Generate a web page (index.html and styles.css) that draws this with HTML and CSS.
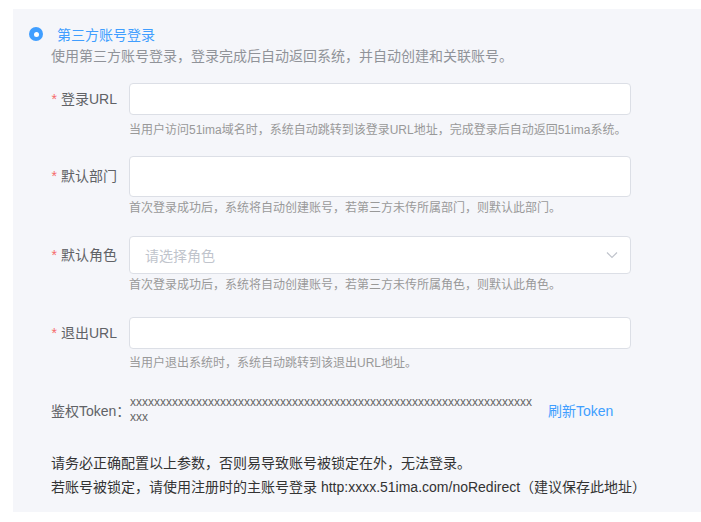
FILE: index.html
```html
<!DOCTYPE html>
<html lang="zh-CN">
<head>
  <meta charset="UTF-8">
  <title>第三方账号登录</title>
  <link rel="stylesheet" href="styles.css">
</head>
<body>

<div class="panel">
  <div class="radio-row">
    <span class="radio"></span>
    <span class="radio-title">第三方账号登录</span>
  </div>
  <p class="desc">使用第三方账号登录，登录完成后自动返回系统，并自动创建和关联账号。</p>

  <div class="form-item item-login">
    <label class="item-label"><span class="req">*</span>登录URL</label>
    <div class="item-body">
      <input class="input" type="text">
      <div class="help">当用户访问51ima域名时，系统自动跳转到该登录URL地址，完成登录后自动返回51ima系统。</div>
    </div>
  </div>

  <div class="form-item item-dept">
    <label class="item-label"><span class="req">*</span>默认部门</label>
    <div class="item-body">
      <input class="input input-tall" type="text">
      <div class="help">首次登录成功后，系统将自动创建账号，若第三方未传所属部门，则默认此部门。</div>
    </div>
  </div>

  <div class="form-item item-role">
    <label class="item-label"><span class="req">*</span>默认角色</label>
    <div class="item-body">
      <div class="select">
        <span class="placeholder">请选择角色</span>
        <svg class="chevron" width="12" height="8" viewBox="0 0 12 8"><path d="M1 1.5 6 6.5 11 1.5" fill="none" stroke="#c0c4cc" stroke-width="1.2"/></svg>
      </div>
      <div class="help">首次登录成功后，系统将自动创建账号，若第三方未传所属角色，则默认此角色。</div>
    </div>
  </div>

  <div class="form-item item-logout">
    <label class="item-label"><span class="req">*</span>退出URL</label>
    <div class="item-body">
      <input class="input" type="text">
      <div class="help">当用户退出系统时，系统自动跳转到该退出URL地址。</div>
    </div>
  </div>

  <div class="token-row">
    <span class="token-label">鉴权Token：</span>
    <span class="token-value">xxxxxxxxxxxxxxxxxxxxxxxxxxxxxxxxxxxxxxxxxxxxxxxxxxxxxxxxxxxxxxxxxxxxxx</span>
    <a class="token-link" href="#">刷新Token</a>
  </div>

  <div class="notes">
    <p>请务必正确配置以上参数，否则易导致账号被锁定在外，无法登录。</p>
    <p>若账号被锁定，请使用注册时的主账号登录 http:xxxx.51ima.com/noRedirect（建议保存此地址）</p>
  </div>
</div>

</body>
</html>
```

FILE: styles.css
```css
body {
  margin: 0;
  background-color: #fff;
  font-family: "Liberation Sans", "Noto Sans CJK SC", sans-serif;
  color: #333;
}

.panel {
  margin: 9px 0 0 13px;
  height: 503px;
  box-sizing: border-box;
  padding: 17px 0 0 38px;
  background-color: #f5f6fa;
}

.radio-row {
  display: flex;
  align-items: center;
  height: 16px;
  margin-left: -22px;
}

.radio {
  width: 14px;
  height: 14px;
  border-radius: 50%;
  background-color: #409eff;
  display: flex;
  align-items: center;
  justify-content: center;
}

.radio::after {
  content: "";
  width: 5px;
  height: 5px;
  border-radius: 50%;
  background-color: #fff;
}

.radio-title {
  margin-left: 14px;
  font-size: 14px;
  color: #409eff;
}

.desc {
  margin: 4px 0 0;
  font-size: 14px;
  line-height: 20px;
  color: #909399;
}

.form-item {
  display: flex;
}

.item-login { margin-top: 17px; }
.item-dept { margin-top: 17px; }
.item-role { margin-top: 19px; }
.item-logout { margin-top: 23px; }

.item-label {
  width: 78px;
  box-sizing: border-box;
  padding-right: 12px;
  text-align: right;
  white-space: nowrap;
  font-size: 14px;
  line-height: 32px;
  color: #606266;
}

.item-dept .item-label { line-height: 41px; }
.item-role .item-label { line-height: 38px; }

.req {
  color: #f56c6c;
  margin-right: 4px;
}

.item-body {
  width: 502px;
}

.input {
  display: block;
  width: 100%;
  height: 32px;
  box-sizing: border-box;
  margin: 0;
  padding: 0 15px;
  border: 1px solid #dcdfe6;
  border-radius: 4px;
  background-color: #fff;
  outline: none;
}

.input-tall {
  height: 41px;
}

.select {
  display: flex;
  align-items: center;
  justify-content: space-between;
  height: 38px;
  box-sizing: border-box;
  padding: 0 12px 0 15px;
  border: 1px solid #dcdfe6;
  border-radius: 4px;
  background-color: #fff;
}

.placeholder {
  font-size: 14px;
  color: #c0c4cc;
}

.help {
  margin-top: 6px;
  font-size: 12px;
  line-height: 18px;
  color: #999;
}

.item-dept .help { margin-top: 2px; }
.item-role .help { margin-top: 2px; }
.item-logout .help { margin-top: 5px; }

.token-row {
  display: flex;
  align-items: center;
  margin-top: 23px;
}

.token-label {
  width: 79px;
  flex-shrink: 0;
  white-space: nowrap;
  font-size: 14px;
  color: #606266;
}

.token-value {
  width: 404px;
  word-break: break-all;
  font-size: 12px;
  line-height: 15px;
  color: #666;
}

.token-link {
  margin-left: 14px;
  font-size: 14px;
  color: #409eff;
  text-decoration: none;
}

.notes {
  margin-top: 26px;
}

.notes p {
  margin: 0;
  font-size: 14px;
  line-height: 24px;
  color: #333;
}
```
